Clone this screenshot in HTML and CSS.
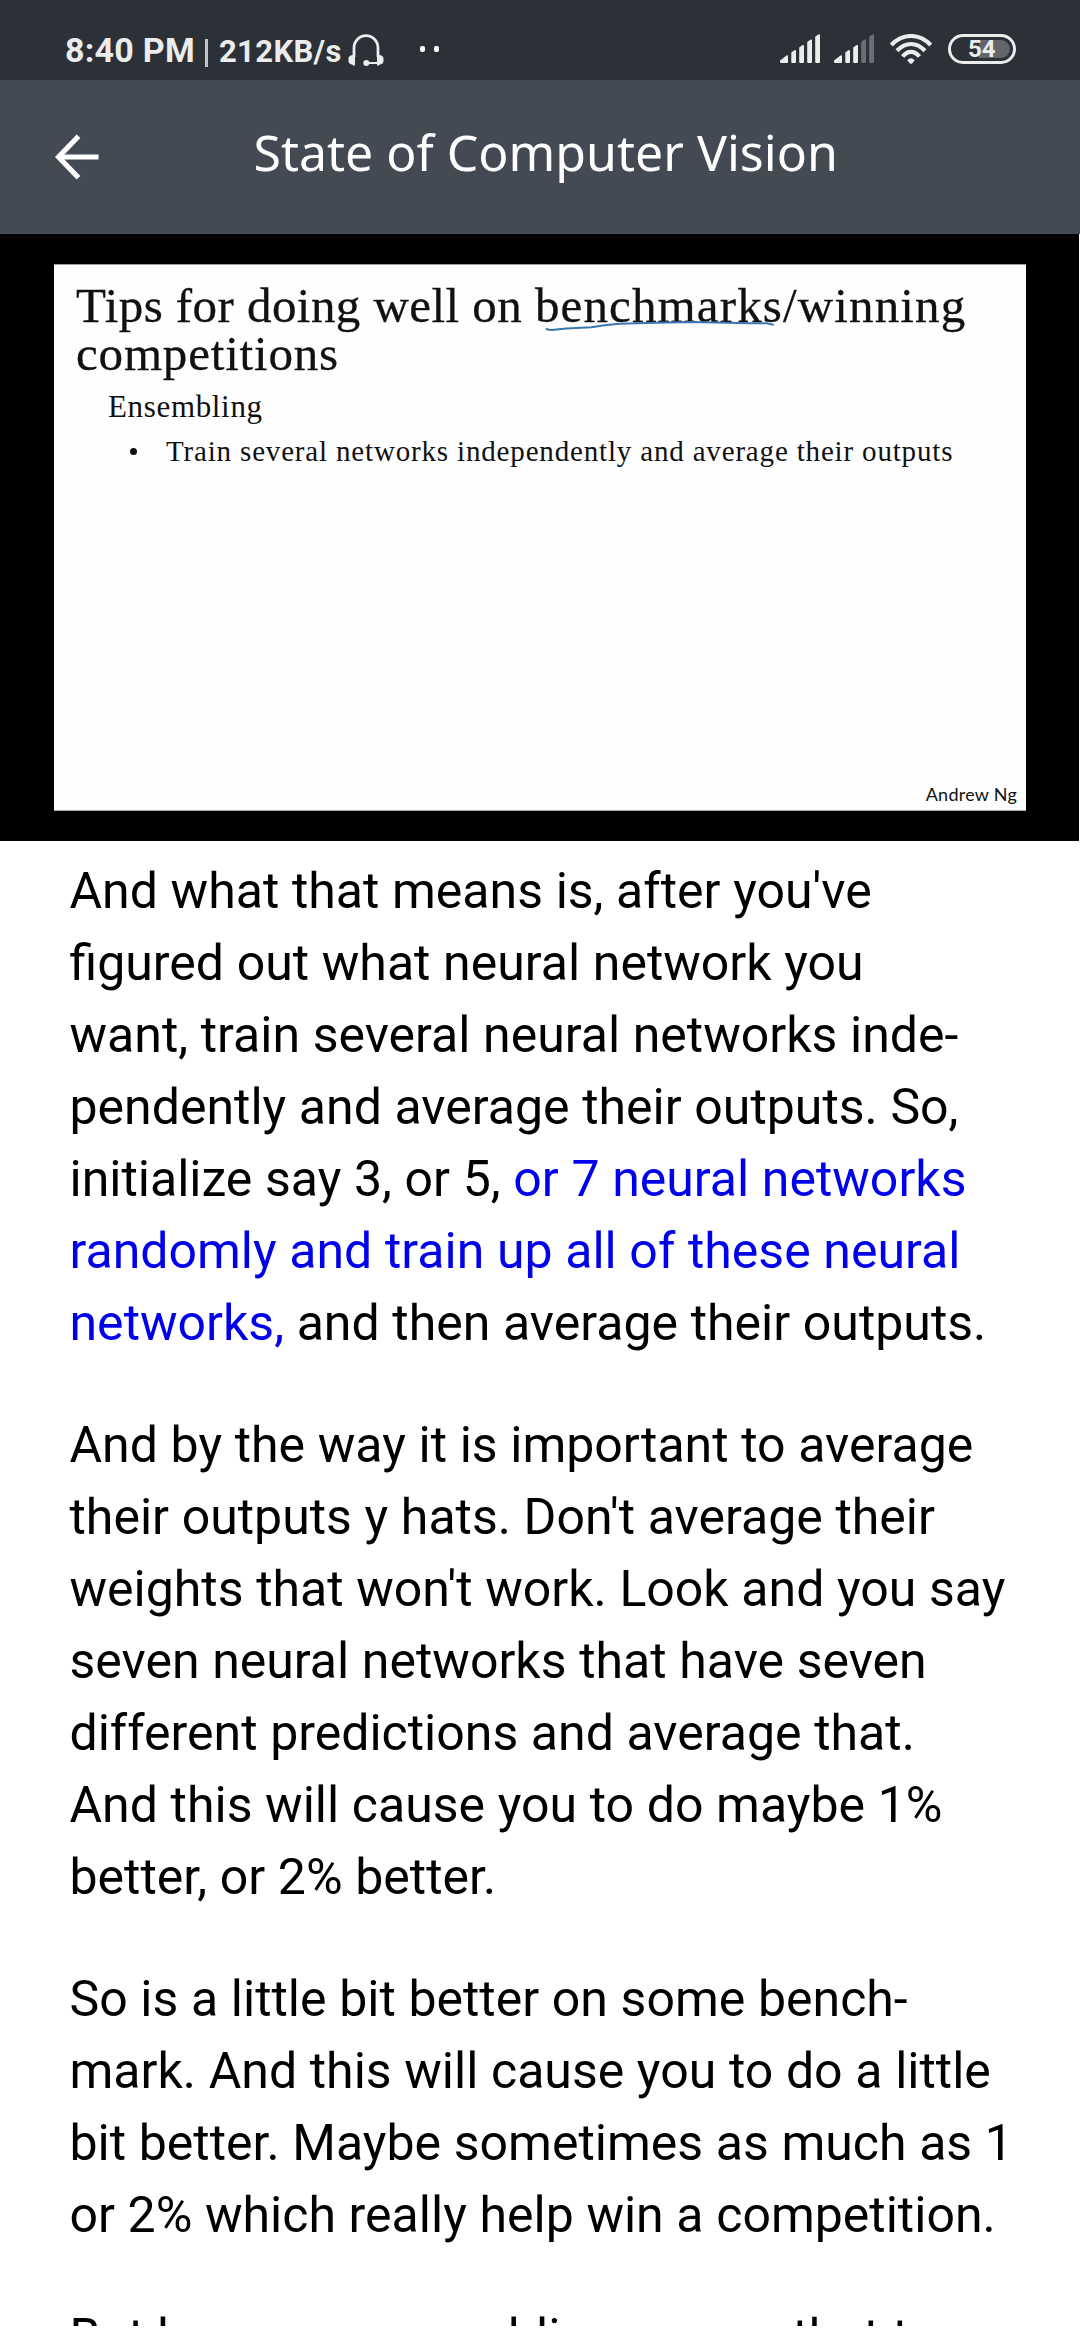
FILE: index.html
```html
<!DOCTYPE html>
<html lang="en">
<head>
<meta charset="utf-8">
<title>State of Computer Vision</title>
<link rel="stylesheet" href="styles.css">
</head>
<body>
<div class="screen">
  <div class="status">
    <span class="clock">8:40 PM</span>
    <span class="divider"></span>
    <span class="speed">212KB/s</span>
    <svg class="headset" width="36" height="32" viewBox="0 0 36 32">
      <path d="M6 23V14a12 12.3 0 0 1 24 0v9" fill="none" stroke="currentColor" stroke-width="2.8"/>
      <path d="M4.400 21H7v10.400H5.200Q4.800 30.400 3 30.200Q.5 29.500.5 27.500V24.500Q.5 21.600 4.400 21ZM31.600 21H29v10.400h1.800Q31.200 30.400 33 30.200q2.500-.7 2.500-2.700v-3q0-2.900-3.900-3.500Z" fill="currentColor"/>
      <circle cx="18.300" cy="29" r="3" fill="currentColor"/>
      <path d="M18 29h12" stroke="currentColor" stroke-width="2"/>
    </svg>
    <span class="dots"><i></i><i></i></span>
    <div class="indicators">
      <svg width="40" height="29" viewBox="0 0 40 29" fill="currentColor">
        <path d="M0 28v-1.500L6.500 21.500Q8 20.800 8 22v6q0 1-1 1H1q-1 0-1-1ZM11.300 18.500l3-2.300q1.700-.8 1.700.6V28q0 1-1 1h-2.700q-1 0-1-1ZM19.200 13.500l3-2.300q1.800-.8 1.800.6V28q0 1-1 1h-2.800q-1 0-1-1ZM27.200 8l3-2.300q1.800-.8 1.800.6V28q0 1-1 1h-2.800q-1 0-1-1ZM35.200 2.800l3-2.300q1.800-.8 1.800.6V28q0 1-1 1h-2.800q-1 0-1-1Z"/>
      </svg>
      <svg width="40" height="29" viewBox="0 0 40 29" fill="currentColor">
        <path d="M0 28v-1.500L6.500 21.500Q8 20.800 8 22v6q0 1-1 1H1q-1 0-1-1ZM11.300 18.500l3-2.300q1.700-.8 1.700.6V28q0 1-1 1h-2.700q-1 0-1-1ZM19.200 13.500l3-2.300q1.800-.8 1.800.6V28q0 1-1 1h-2.800q-1 0-1-1Z"/>
        <path class="weak" d="M27.200 8l3-2.300q1.800-.8 1.800.6V28q0 1-1 1h-2.800q-1 0-1-1ZM35.200 2.800l3-2.300q1.800-.8 1.800.6V28q0 1-1 1h-2.800q-1 0-1-1Z"/>
      </svg>
      <svg class="wifi" width="42" height="30" viewBox="0 0 42 30" fill="none" stroke="currentColor" stroke-width="4.200">
        <path d="M1.300 11Q10 2 21 2T40.700 11"/>
        <path d="M7 16.800Q13.500 10 21 10T35 16.800"/>
        <path d="M12.600 22.500Q16.600 17.800 21 17.800T29.400 22.500"/>
        <path d="M17.200 26.200Q21 22.500 24.800 26.200L22.300 29.200Q21 30.500 19.700 29.200Z" fill="currentColor" stroke="none"/>
      </svg>
      <div class="battery"><span>54</span></div>
    </div>
  </div>

  <header class="appbar">
    <svg class="back" width="44" height="46" viewBox="0 0 44 46" fill="none" stroke="#fff" stroke-width="5.200">
      <path d="M43.500 23H4"/><path d="M23.500 2.300L3.500 23L23.500 43.700"/>
    </svg>
    <h1>State of Computer Vision</h1>
  </header>

  <section class="media">
    <div class="slide">
      <h2><span class="row">Tips for doing well on <span class="wide">benchmarks/winning</span></span><span class="row second">competitions</span></h2>
      <p class="topic">Ensembling</p>
      <p class="point"><i class="bullet"></i>Train several networks independently and average their outputs</p>
      <p class="author">Andrew Ng</p>
      <svg class="ink" width="230" height="12" viewBox="0 0 230 12" fill="none" stroke="#3a77b0" stroke-width="2" stroke-linecap="round" stroke-linejoin="round">
        <path d="M1.500 9Q5 10.500 9 9.800L21.500 8.500L46.500 7.300Q62 4.500 75 3.800L100 3L147 2L204 3.300H222L228 4.800"/>
      </svg>
    </div>
  </section>

  <main class="transcript">
    <p>And what that means is, after you've<br>figured out what neural network you<br>want, train several neural networks inde-<br>pendently and average their outputs. So,<br>initialize say 3, or 5, <span class="current">or 7 neural networks<br>randomly and train up all of these neural<br>networks,</span> and then average their outputs.</p>
    <p>And by the way it is important to average<br>their outputs y hats. Don't average their<br>weights that won't work. Look and you say<br>seven neural networks that have seven<br>different predictions and average that.<br>And this will cause you to do maybe 1%<br>better, or 2% better.</p>
    <p>So is a little bit better on some bench-<br>mark. And this will cause you to do a little<br>bit better. Maybe sometimes as much as 1<br>or 2% which really help win a competition.</p>
    <p>But because ensembling means that to</p>
  </main>
</div>
</body>
</html>
```
FILE: styles.css
```css
* { box-sizing: border-box; }
body { margin: 0; background: #fff; }
h1, h2, p { margin: 0; font-weight: 400; }

.screen {
  width: 1080px;
  height: 2340px;
  padding-bottom: 14px;
  display: flex;
  flex-direction: column;
  overflow: hidden;
  background: #fff;
  font-family: Roboto, sans-serif;
}

.status {
  flex: none;
  height: 80px;
  padding: 0 64px 0 65px;
  display: flex;
  align-items: flex-start;
  background: #2c3037;
  color: #ebecec;
}
.clock { margin-top: 30px; font: 700 34px/40px Roboto, sans-serif; letter-spacing: .25px; }
.divider { width: 3px; height: 28px; margin: 39px 11px 0 10px; background: #c2c4c6; }
.speed { margin-top: 33px; font: 700 31px/37px Roboto, sans-serif; letter-spacing: .35px; }
.headset { margin: 34px 0 0 6px; }
.dots { display: flex; gap: 9px; margin: 46px 0 0 36px; }
.dots i { width: 5px; height: 6px; border-radius: 2px; background: #fff; }

.indicators { display: flex; align-items: flex-start; gap: 14px; margin: 34px 0 0 auto; }
.weak { fill: #6b6e73; }
.wifi { margin-left: 2px; }
.battery {
  width: 68px;
  height: 30px;
  margin-left: 2px;
  border: 3px solid #ebecec;
  border-radius: 15px;
  padding: 3px;
}
.battery span {
  display: block;
  height: 18px;
  padding-left: 14px;
  border-radius: 0 9px 9px 0;
  background: linear-gradient(#62656a, #62656a) right / 31px 100% no-repeat;
  font: 700 24px/19px Roboto, sans-serif;
}

.appbar {
  flex: none;
  height: 154px;
  padding-left: 55px;
  display: flex;
  align-items: flex-start;
  background: #444a53;
  color: #fff;
}
.back { margin-top: 54px; }
.appbar h1 { margin: 38px 0 0 154.5px; font: 400 50px/68px "Noto Sans", sans-serif; }

.media {
  flex: none;
  width: 1079px;
  height: 607px;
  padding: 30px 53px 30px 54px;
  background: #000;
}
.slide {
  position: relative;
  height: 547px;
  padding: 17px 9px 5px 22px;
  display: flex;
  flex-direction: column;
  background: #fefefe;
  border-top: 1px solid #9b9b9b;
  border-bottom: 1px solid #aaa;
  color: #111;
  font-family: "Liberation Serif", serif;
  white-space: nowrap;
}
.slide h2 { font-size: 49px; line-height: 48px; letter-spacing: .44px; -webkit-text-stroke: .3px #111; }
.row { display: block; }
.wide { letter-spacing: 1.14px; }
.second { letter-spacing: .82px; }
.topic { margin: 11px 0 0 32px; font-size: 31px; line-height: 35px; letter-spacing: .66px; }
.point { display: flex; align-items: center; margin: 11px 0 0 54px; font-size: 29px; line-height: 32px; letter-spacing: .83px; }
.bullet { width: 7px; height: 7px; margin-right: 29px; border-radius: 50%; background: #111; }
.author { margin: auto 0 0 auto; font: 400 18px/22px Lato, sans-serif; letter-spacing: .25px; }
.ink { position: absolute; left: 491px; top: 55px; }

.transcript {
  flex: 1;
  min-height: 0;
  overflow: hidden;
  padding: 14px 0 0 69.5px;
  color: #000;
  font-size: 50px;
  line-height: 72px;
  word-spacing: .25px;
  white-space: nowrap;
}
.transcript p + p { margin-top: 50px; }
.current { color: #0000ea; }
```
